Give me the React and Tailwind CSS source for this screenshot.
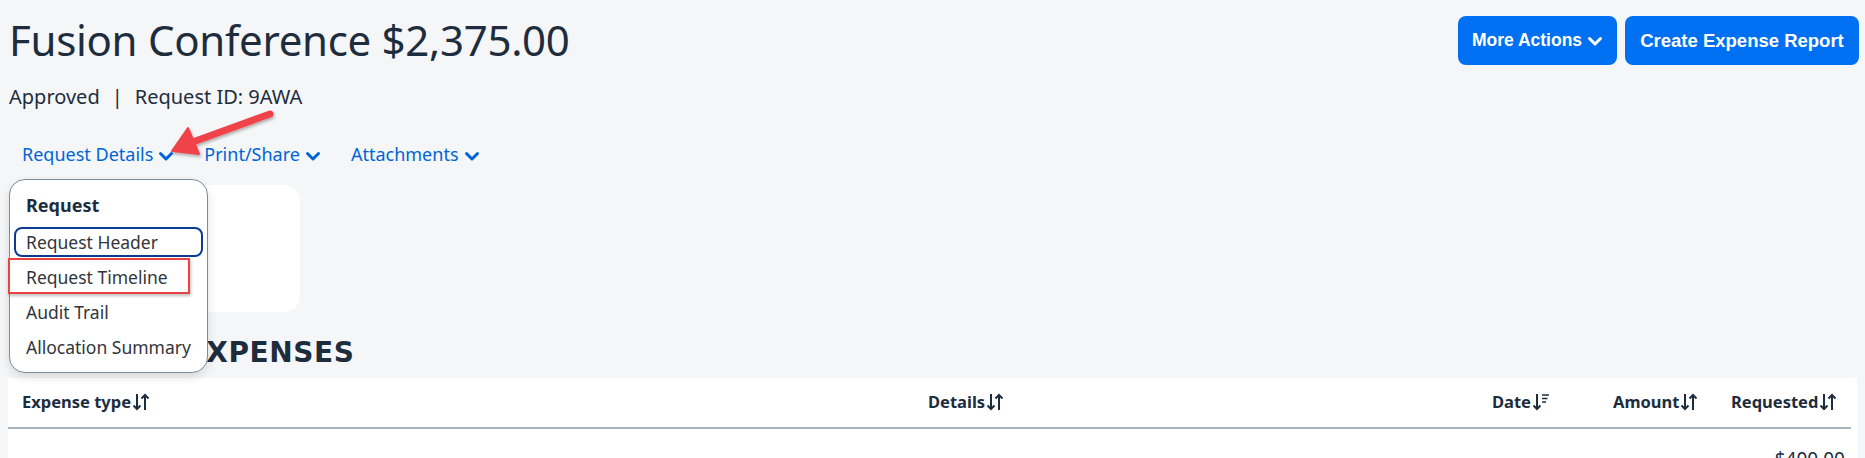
const font = { fontFamily: '"Noto Sans", Arial, sans-serif' };
const btnFont = { fontFamily: '"Liberation Sans", Arial, sans-serif' };
const headFont = { fontFamily: '"DejaVu Sans", Arial, sans-serif' };

function Chevron({ className = '' }) {
    return (
        <svg width="16" height="12" viewBox="0 0 16 12" className={className} fill="none" stroke="currentColor" strokeWidth="3" strokeLinecap="round" strokeLinejoin="round">
            <path d="M2.5 3.5L8 9l5.5-5.5" />
        </svg>
    );
}

function SortIcon() {
    return (
        <svg width="18" height="20" viewBox="0 0 18 20" className="inline-block ml-[1px] -mt-[3px]" fill="none" stroke="currentColor" strokeWidth="2">
            <path d="M5 2v15M1.5 13.5L5 17l3.5-3.5" />
            <path d="M13 18V3M9.5 6.5L13 3l3.5 3.5" />
        </svg>
    );
}

function SortDescIcon() {
    return (
        <svg width="18" height="20" viewBox="0 0 18 20" className="inline-block ml-[1px] -mt-[3px]" fill="none" stroke="currentColor" strokeWidth="2">
            <path d="M5 2v15M1.5 13.5L5 17l3.5-3.5" />
            <path d="M10 3h7M10 6.5h5.5M10 10h4" strokeWidth="1.6" />
        </svg>
    );
}

function Tab({ label }) {
    return (
        <button className="flex items-center gap-[5px] text-[18px] text-[#0064d9]">
            {label}
            <Chevron className="mt-[2px]" />
        </button>
    );
}

export default function App() {
    return (
        <div className="relative h-[458px] w-full overflow-hidden bg-[#f5f6f7] text-[#1d2d3e]" style={font}>
            <header className="flex items-start justify-between pl-[9px] pr-[6px]">
                <div>
                    <h1 className="mt-[15px] text-[42px] leading-[50px] tracking-[-0.3px]">Fusion Conference $2,375.00</h1>
                    <p className="mt-[19px] flex text-[20px] leading-[26px]">
                        <span>Approved</span>
                        <span className="mx-[12px]">|</span>
                        <span>Request ID: 9AWA</span>
                    </p>
                </div>
                <div className="mt-[16px] flex gap-[8px]" style={btnFont}>
                    <button className="flex h-[49px] w-[159px] items-center justify-center gap-[5px] rounded-[8px] bg-[#0070f2] text-[17.5px] font-bold text-white">
                        More Actions
                        <Chevron className="mt-[1px]" />
                    </button>
                    <button className="h-[49px] w-[234px] rounded-[8px] bg-[#0070f2] text-[18.5px] font-bold text-white">
                        Create Expense Report
                    </button>
                </div>
            </header>

            <nav className="mt-[31px] flex gap-[30px] pl-[22px]">
                <Tab label="Request Details" />
                <Tab label="Print/Share" />
                <Tab label="Attachments" />
            </nav>

            <div className="mt-[17px] ml-[9px] h-[127px] w-[291px] rounded-[16px] bg-white" />

            <h2 className="mt-[22px] pl-[9px] text-[28px] font-bold leading-[38px] tracking-[0.6px]" style={headFont}>EXPECTED EXPENSES</h2>

            <div className="mx-[8px] mt-[6px] bg-white pr-[6px]">
                <div className="flex h-[51px] items-center border-b-2 border-[#a9b4be] pl-[14px] text-[16.5px] font-bold">
                    <div className="w-[906px]">Expense type<SortIcon /></div>
                    <div className="w-[564px]">Details<SortIcon /></div>
                    <div className="w-[121px]">Date<SortDescIcon /></div>
                    <div className="w-[118px]">Amount<SortIcon /></div>
                    <div>Requested<SortIcon /></div>
                </div>
                <div className="flex h-[40px] justify-end pr-[6px] pt-[18px] text-[19px] leading-[24px]">$400.00</div>
            </div>

            <div className="absolute left-[9px] top-[179px] w-[199px] rounded-[16px] border border-[#7d8c9b] bg-white pb-[10px] pt-[13px] shadow-[0_4px_10px_rgba(0,0,0,0.12)]">
                <div className="pl-[16px] text-[18px] font-bold leading-[24px]">Request</div>
                <ul className="mt-[10px] flex flex-col gap-[5px] text-[17.5px] text-[#32363a]">
                    <li className="mx-[4px] flex h-[30px] items-center rounded-[8px] border-2 border-[#0a3d91] pl-[10px]">Request Header</li>
                    <li className="flex h-[30px] items-center pl-[16px]">Request Timeline</li>
                    <li className="flex h-[30px] items-center pl-[16px]">Audit Trail</li>
                    <li className="flex h-[30px] items-center pl-[16px]">Allocation Summary</li>
                </ul>
            </div>

            <div className="absolute left-[8px] top-[258px] h-[36px] w-[182px] border-2 border-[#ea4343] shadow-[1px_2px_3px_rgba(0,0,0,0.25)]" />

            <svg className="absolute left-[160px] top-[105px]" width="120" height="65" viewBox="160 105 120 65">
                <defs>
                    <filter id="sh" x="-20%" y="-20%" width="150%" height="160%">
                        <feDropShadow dx="1" dy="2" stdDeviation="1.5" floodColor="#000" floodOpacity="0.3" />
                    </filter>
                </defs>
                <g filter="url(#sh)" fill="#f0434a" stroke="#f0434a">
                    <path d="M270 114 L190 143" strokeWidth="7" strokeLinecap="round" fill="none" />
                    <path d="M172 151 L188 128 L199 154 Z" strokeWidth="2" strokeLinejoin="round" />
                </g>
            </svg>
        </div>
    );
}
